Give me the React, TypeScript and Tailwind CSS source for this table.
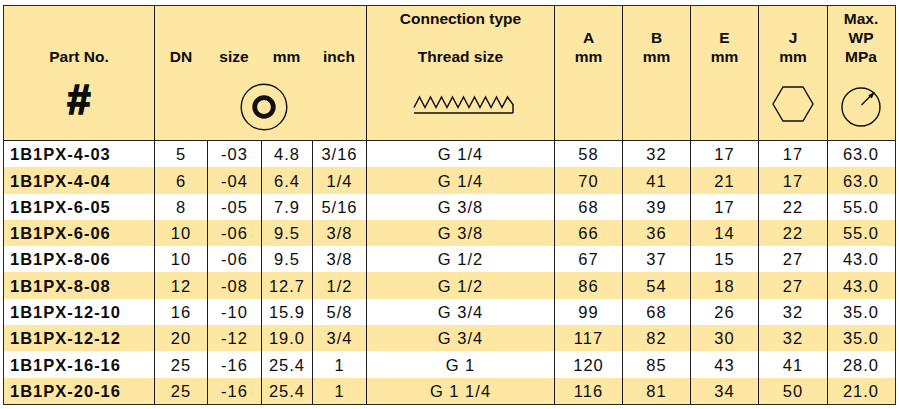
import React from 'react';

const cols =
  'grid grid-cols-[150px_53px_54px_51px_54px_188px_68px_68px_68px_69px_67px]';

const rows = [
  ['1B1PX-4-03', '5', '-03', '4.8', '3/16', 'G 1/4', '58', '32', '17', '17', '63.0'],
  ['1B1PX-4-04', '6', '-04', '6.4', '1/4', 'G 1/4', '70', '41', '21', '17', '63.0'],
  ['1B1PX-6-05', '8', '-05', '7.9', '5/16', 'G 3/8', '68', '39', '17', '22', '55.0'],
  ['1B1PX-6-06', '10', '-06', '9.5', '3/8', 'G 3/8', '66', '36', '14', '22', '55.0'],
  ['1B1PX-8-06', '10', '-06', '9.5', '3/8', 'G 1/2', '67', '37', '15', '27', '43.0'],
  ['1B1PX-8-08', '12', '-08', '12.7', '1/2', 'G 1/2', '86', '54', '18', '27', '43.0'],
  ['1B1PX-12-10', '16', '-10', '15.9', '5/8', 'G 3/4', '99', '68', '26', '32', '35.0'],
  ['1B1PX-12-12', '20', '-12', '19.0', '3/4', 'G 3/4', '117', '82', '30', '32', '35.0'],
  ['1B1PX-16-16', '25', '-16', '25.4', '1', 'G 1', '120', '85', '43', '41', '28.0'],
  ['1B1PX-20-16', '25', '-16', '25.4', '1', 'G 1 1/4', '116', '81', '34', '50', '21.0'],
];

// zigzag thread outline, 9 teeth
const threadPath = (() => {
  let d = 'M2 12.5';
  for (let i = 0; i < 9; i++) {
    d += ` L${7.5 + 11 * i} 2`;
    if (i < 8) d += ` L${13 + 11 * i} 12.5`;
  }
  d += ' L101 9.5 L101 18 M2 18 H101';
  return d;
})();

function HeadText({ lines, border = true }: { lines: string[]; border?: boolean }) {
  return (
    <div
      className={`flex flex-col items-center justify-end text-center leading-[19px] ${
        border ? 'border-l border-[#1c1c1c]' : ''
      }`}
    >
      {lines.map((l, i) => (
        <span key={i} className="h-[19px]">
          {l}
        </span>
      ))}
    </div>
  );
}

export default function App() {
  return (
    <div className="min-h-screen bg-white pt-[5px] pl-[3px] font-['Liberation_Sans',Arial,sans-serif] text-[#0d0d0d]">
      <div className="w-[893px] border-[1.5px] border-[#2b2820]">
        {/* Header */}
        <div
          className={`${cols} grid-rows-[59.5px_74.5px] border-b-[1.5px] border-[#1c1c1c] bg-[#fee6a3] text-[15.5px] font-bold`}
        >
          <HeadText lines={['Part No.']} border={false} />
          <HeadText lines={['DN']} />
          <HeadText lines={['size']} border={false} />
          <HeadText lines={['mm']} border={false} />
          <HeadText lines={['inch']} border={false} />
          <HeadText lines={['Connection type', '', 'Thread size']} />
          <HeadText lines={['A', 'mm']} />
          <HeadText lines={['B', 'mm']} />
          <HeadText lines={['E', 'mm']} />
          <HeadText lines={['J', 'mm']} />
          <HeadText lines={['Max.', 'WP', 'MPa']} />

          <div className="flex justify-center pt-[13.5px] text-[42px] leading-none [-webkit-text-stroke:1.6px_#0d0d0d]">
            #
          </div>
          <div className="col-span-4 flex justify-center border-l border-[#1c1c1c] pt-[17px] pl-[6px]">
            <svg width="48" height="48" viewBox="0 0 48 48" fill="none" stroke="#111">
              <circle cx="24" cy="24" r="22.8" strokeWidth="1.4" />
              <circle cx="24" cy="24" r="9.3" strokeWidth="4.8" />
            </svg>
          </div>
          <div className="flex justify-center border-l border-[#1c1c1c] pt-[29px] pl-[6px]">
            <svg width="103" height="20" viewBox="0 0 103 20" fill="none" stroke="#111" strokeWidth="1.5">
              <path d={threadPath} strokeLinejoin="miter" />
            </svg>
          </div>
          <div className="border-l border-[#1c1c1c]" />
          <div className="border-l border-[#1c1c1c]" />
          <div className="border-l border-[#1c1c1c]" />
          <div className="flex justify-center border-l border-[#1c1c1c] pt-[19px]">
            <svg width="44" height="38" viewBox="0 0 44 38" fill="none" stroke="#111" strokeWidth="1.4">
              <path d="M2 19 L12 2 H32 L42 19 L32 36 H12 Z" strokeLinejoin="miter" />
            </svg>
          </div>
          <div className="flex justify-center border-l border-[#1c1c1c] pt-[20px]">
            <svg width="42" height="42" viewBox="0 0 42 42" fill="none" stroke="#111" strokeWidth="1.4">
              <circle cx="21" cy="21" r="19" />
              <path d="M21.5 19 L31 9.5" />
              <path d="M35 5.5 L28.5 9.2 L31.8 12.5 Z" fill="#111" stroke="none" />
            </svg>
          </div>
        </div>

        {/* Rows */}
        {rows.map((r, ri) => (
          <div
            key={ri}
            className={`${cols} h-[26.3px] text-[16.5px] tracking-[1px] ${
              ri % 2 === 1 ? 'bg-[#fee6a3]' : 'bg-white'
            }`}
          >
            {r.map((c, ci) =>
              ci === 0 ? (
                <div key={ci} className="flex items-center pl-[6px] pt-[1px] font-bold">
                  {c}
                </div>
              ) : (
                <div
                  key={ci}
                  className="flex items-center justify-center border-l border-[#1c1c1c] pt-[1px]"
                >
                  {c}
                </div>
              ),
            )}
          </div>
        ))}
      </div>
    </div>
  );
}
